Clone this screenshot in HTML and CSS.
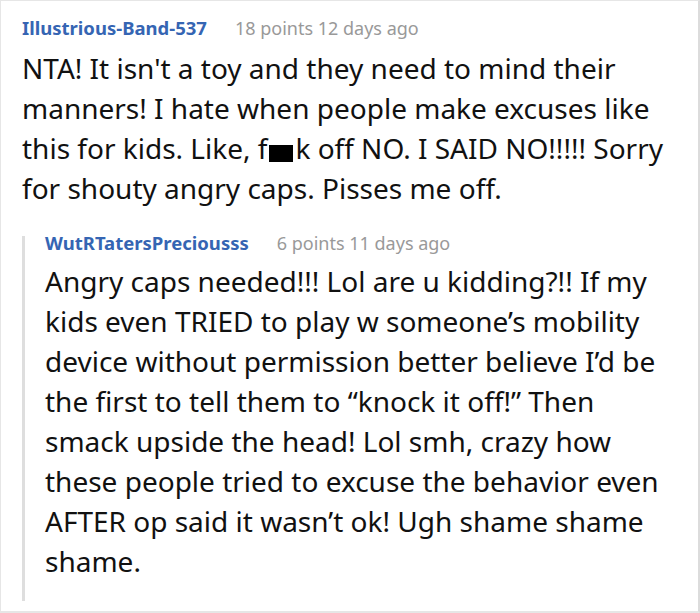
FILE: index.html
```html
<!DOCTYPE html>
<html>
<head>
<meta charset="utf-8">
<link rel="stylesheet" href="styles.css">
</head>
<body>
<div class="frame">
  <div class="comment">
    <div class="meta"><span class="user">Illustrious-Band-537</span><span class="info">18 points 12 days ago</span></div>
    <p class="text">NTA! It isn't a toy and they need to mind their manners! I hate when people make excuses like this for kids. Like, f<span class="censor"></span>k off NO. I SAID NO!!!!! Sorry for shouty angry caps. Pisses me off.</p>
    <div class="reply">
      <div class="meta"><span class="user">WutRTatersPreciousss</span><span class="info">6 points 11 days ago</span></div>
      <p class="text">Angry caps needed!!! Lol are u kidding?!! If my kids even TRIED to play w someone’s mobility device without permission better believe I’d be the first to tell them to “knock it off!” Then smack upside the head! Lol smh, crazy how these people tried to excuse the behavior even AFTER op said it wasn’t ok! Ugh shame shame shame.</p>
    </div>
  </div>
</div>
</body>
</html>
```
FILE: styles.css
```css
html, body {
  margin: 0;
  padding: 0;
  background: #fff;
}
body {
  font-family: "Noto Sans", "Open Sans", sans-serif;
  color: #111;
}
.frame {
  width: 700px;
  height: 613px;
  box-sizing: border-box;
  border: 1px solid #e6e6e6;
  border-right: 2px solid #dcdcdc;
  border-bottom: 2px solid #e6e6e6;
  padding: 13px 15px 0 21px;
}
.meta {
  display: flex;
  align-items: baseline;
  gap: 28px;
  height: 28px;
  line-height: 28px;
  margin-bottom: 6px;
}
.user {
  font-weight: 700;
  color: #3565b3;
  font-size: 18.5px;
}
.info {
  color: #999;
  font-size: 18px;
}
.text {
  margin: 0;
  font-size: 28px;
  line-height: 40px;
  color: #111;
}
.censor {
  display: inline-block;
  width: 24px;
  height: 17px;
  margin: 0 2px;
  background: #000;
  vertical-align: -3px;
}
.reply {
  margin-top: 28px;
  border-left: 3px solid #dedede;
  padding: 0 0 20px 20px;
}
.reply .meta {
  height: 14px;
  line-height: 14px;
  margin-bottom: 11px;
}
```
